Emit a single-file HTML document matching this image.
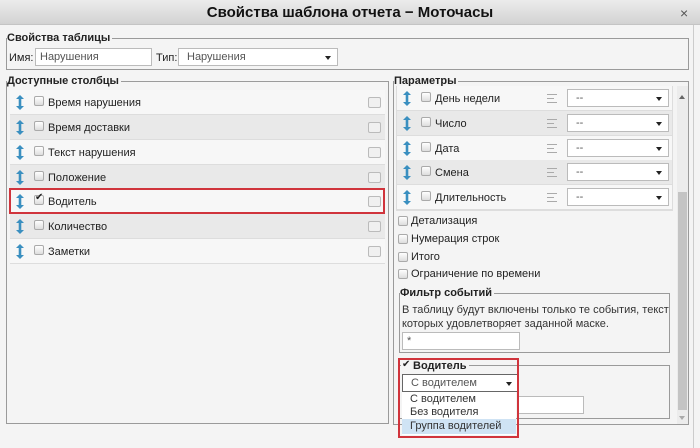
<!DOCTYPE html>
<html><head><meta charset="utf-8"><style>
*{box-sizing:border-box;margin:0;padding:0}
body{width:700px;height:448px;overflow:hidden;background:#f4f4f4;font-family:"Liberation Sans",sans-serif;font-size:11px;color:#222;position:relative}
.a{position:absolute}
.title{left:0;top:0;width:700px;height:25px;background:linear-gradient(#ececec,#d2d2d2);border-bottom:1px solid #c4c4c4;text-align:center;font-weight:bold;font-size:15px;line-height:25px;color:#111}
.fs{border:1px solid #9a9a9a}
.lg{font-weight:bold;background:#f4f4f4;padding-right:2px;font-size:11px;line-height:12px}
.inp{background:#fff;border:1px solid #bbb;color:#555;padding-left:4px;line-height:16px}
.row{left:10px;width:375px;height:25px;border-bottom:1px solid #ddd;background:#f7f7f7}
.row.g{background:#e9e9e9}
.arr{position:absolute;left:6px;top:5px;width:8px;height:15px}
.cb{position:absolute;width:10px;height:10px;border:1px solid #aaa;border-radius:2px;background:linear-gradient(#fff,#ddd)}
.ed{position:absolute;right:4px;top:7px;width:13px;height:11px;border:1px solid #bbb;background:#f0f0f0;border-radius:2px}
.lbl{position:absolute;left:38px;top:1px;line-height:25px}
.prow{left:397px;width:275px;height:25px;border-bottom:1px solid #ddd;background:#f7f7f7}
.prow.g{background:#e9e9e9}
.sel{position:absolute;left:170px;top:3px;width:102px;height:18px;background:#fff;border:1px solid #bbb;padding-left:8px;line-height:16px;color:#555}
.sel:after,.dd:after{content:"";position:absolute;right:6px;top:7px;border:3.5px solid transparent;border-top:4px solid #222}
.sort{position:absolute;left:150px;top:8px;width:10px;height:9px;border-top:1px solid #aaa;border-bottom:1px solid #aaa}
.sort:after{content:"";position:absolute;left:0;top:3px;width:7px;border-top:1px solid #aaa}
</style></head><body>
<div class="a title">Свойства шаблона отчета − Моточасы</div>
<div class="a" style="left:680px;top:5px;font-size:14px;color:#555">×</div>
<div class="a" style="left:693px;top:25px;width:1px;height:423px;background:#ccc"></div>

<div class="a fs" style="left:6px;top:38px;width:683px;height:32px"></div>
<div class="a lg" style="left:7px;top:32px">Свойства таблицы</div>
<div class="a" style="left:9px;top:52px">Имя:</div>
<div class="a inp" style="left:35px;top:48px;width:117px;height:18px">Нарушения</div>
<div class="a" style="left:156px;top:52px">Тип:</div>
<div class="a inp dd" style="left:178px;top:48px;width:160px;height:18px;padding-left:8px">Нарушения</div>

<div class="a fs" style="left:6px;top:81px;width:383px;height:343px"></div>
<div class="a lg" style="left:7px;top:75px">Доступные столбцы</div>
<svg width="0" height="0" style="position:absolute"><defs><symbol id="ar" viewBox="0 0 8 15"><path d="M4 0L8 4H5.3V11H8L4 15L0 11H2.7V4H0Z" fill="#3a8fc0"/></symbol></defs></svg>
<div class="a row" style="top:90px"><svg class="arr"><use href="#ar"/></svg><div class="cb" style="left:24px;top:6px"></div><div class="lbl">Время нарушения</div><div class="ed"></div></div>
<div class="a row g" style="top:115px"><svg class="arr"><use href="#ar"/></svg><div class="cb" style="left:24px;top:6px"></div><div class="lbl">Время доставки</div><div class="ed"></div></div>
<div class="a row" style="top:140px"><svg class="arr"><use href="#ar"/></svg><div class="cb" style="left:24px;top:6px"></div><div class="lbl">Текст нарушения</div><div class="ed"></div></div>
<div class="a row g" style="top:165px"><svg class="arr"><use href="#ar"/></svg><div class="cb" style="left:24px;top:6px"></div><div class="lbl">Положение</div><div class="ed"></div></div>
<div class="a row" style="top:189px"><svg class="arr"><use href="#ar"/></svg><div class="cb" style="left:24px;top:6px"></div><div class="a" style="left:25px;top:3px;font-size:10px">✔</div><div class="lbl">Водитель</div><div class="ed"></div></div>
<div class="a row g" style="top:214px"><svg class="arr"><use href="#ar"/></svg><div class="cb" style="left:24px;top:6px"></div><div class="lbl">Количество</div><div class="ed"></div></div>
<div class="a row" style="top:239px"><svg class="arr"><use href="#ar"/></svg><div class="cb" style="left:24px;top:6px"></div><div class="lbl">Заметки</div><div class="ed"></div></div>
<div class="a" style="left:9px;top:188px;width:376px;height:26px;border:2px solid #d0343c"></div>

<div class="a fs" style="left:393px;top:81px;width:296px;height:344px"></div>
<div class="a lg" style="left:394px;top:75px">Параметры</div>
<div class="a" style="left:677px;top:86px;width:11px;height:338px;background:#ececec"></div>
<div class="a" style="left:678px;top:192px;width:9px;height:218px;background:#c4c4c4"></div>
<div class="a" style="left:679px;top:92px;border:3px solid transparent;border-bottom:4px solid #666"></div>
<div class="a" style="left:679px;top:416px;border:3px solid transparent;border-top:4px solid #aaa"></div>
<div class="a" style="left:396px;top:86px;width:277px;height:125px;border:1px solid #ddd"></div>
<div class="a prow" style="top:86px"><svg class="arr"><use href="#ar"/></svg><div class="cb" style="left:24px;top:6px"></div><div class="lbl">День недели</div><div class="sort"></div><div class="sel">--</div></div>
<div class="a prow g" style="top:111px"><svg class="arr"><use href="#ar"/></svg><div class="cb" style="left:24px;top:6px"></div><div class="lbl">Число</div><div class="sort"></div><div class="sel">--</div></div>
<div class="a prow" style="top:136px"><svg class="arr"><use href="#ar"/></svg><div class="cb" style="left:24px;top:6px"></div><div class="lbl">Дата</div><div class="sort"></div><div class="sel">--</div></div>
<div class="a prow g" style="top:160px"><svg class="arr"><use href="#ar"/></svg><div class="cb" style="left:24px;top:6px"></div><div class="lbl">Смена</div><div class="sort"></div><div class="sel">--</div></div>
<div class="a prow" style="top:185px"><svg class="arr"><use href="#ar"/></svg><div class="cb" style="left:24px;top:6px"></div><div class="lbl">Длительность</div><div class="sort"></div><div class="sel">--</div></div>

<div class="cb" style="left:398px;top:216px"></div><div class="a" style="left:411px;top:215px">Детализация</div>
<div class="cb" style="left:398px;top:234px"></div><div class="a" style="left:411px;top:233px">Нумерация строк</div>
<div class="cb" style="left:398px;top:252px"></div><div class="a" style="left:411px;top:251px">Итого</div>
<div class="cb" style="left:398px;top:269px"></div><div class="a" style="left:411px;top:268px">Ограничение по времени</div>

<div class="a fs" style="left:399px;top:293px;width:271px;height:60px"></div>
<div class="a lg" style="left:400px;top:287px">Фильтр событий</div>
<div class="a" style="left:402px;top:303px;line-height:14px;color:#333">В таблицу будут включены только те события, текст<br>которых удовлетворяет заданной маске.</div>
<div class="a inp" style="left:402px;top:332px;width:118px;height:18px">*</div>

<div class="a fs" style="left:399px;top:365px;width:271px;height:54px"></div>
<div class="a lg" style="left:401px;top:360px;padding-left:12px">Водитель</div>
<div class="a" style="left:402px;top:359px;font-size:10px">✔</div>
<div class="a inp" style="left:518px;top:396px;width:66px;height:18px"></div>
<div class="a inp dd" style="left:402px;top:374px;width:117px;height:18px;padding-left:8px;border-color:#666">С водителем</div>
<div class="a" style="left:402px;top:392px;width:114px;height:43px;background:#fff;line-height:13px;color:#333;padding-top:1px">
<div style="padding-left:8px">С водителем</div><div style="padding-left:8px">Без водителя</div><div style="padding-left:8px;background:#cfe3f4;height:15px;line-height:15px">Группа водителей</div></div>
<div class="a" style="left:398px;top:358px;width:121px;height:80px;border:2px solid #d0343c"></div>
</body></html>
